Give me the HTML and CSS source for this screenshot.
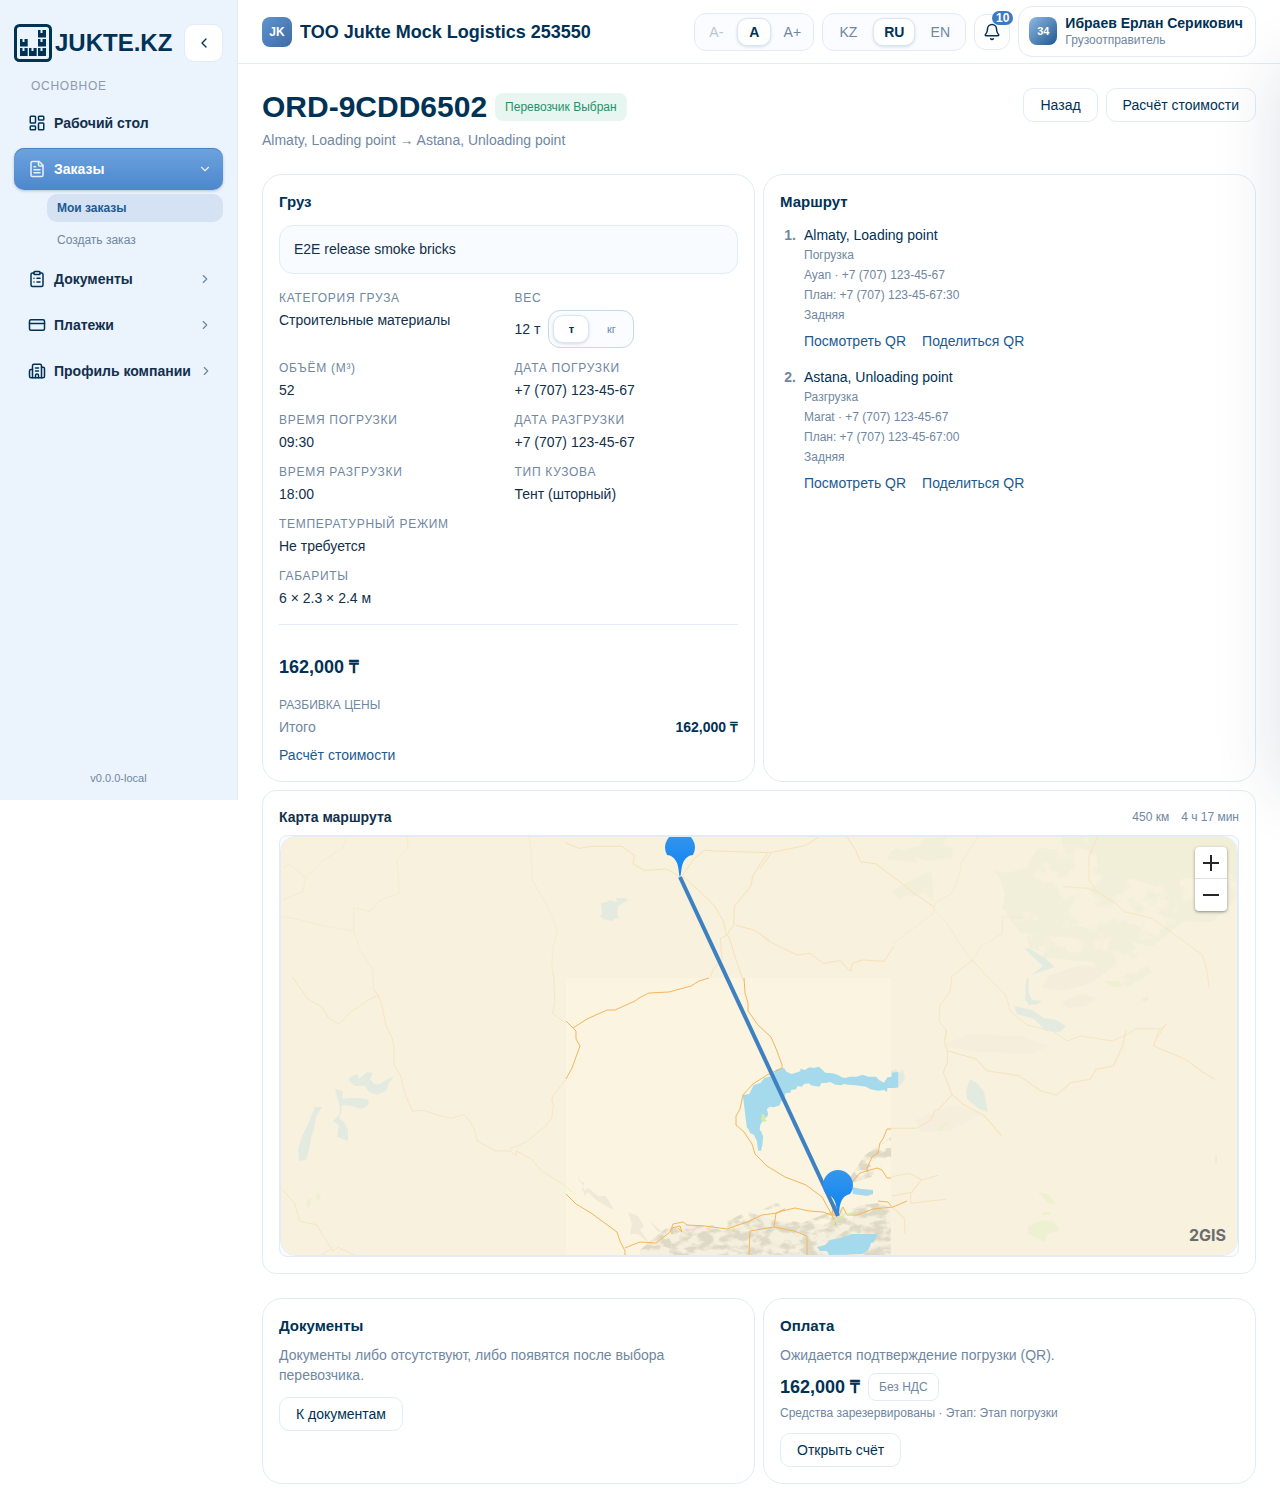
FILE: index.html
```html
<!DOCTYPE html>
<html lang="ru">
<head>
<meta charset="utf-8">
<meta name="viewport" content="width=device-width, initial-scale=1">
<title>ORD-9CDD6502 — JUKTE.KZ</title>
<link rel="stylesheet" href="styles.css">
</head>
<body>
<div class="app">
  <aside class="sidebar">
    <div class="brand-row">
      <a class="brand" href="#">
        <svg class="brand-mark" viewBox="0 0 38 38" aria-hidden="true">
          <rect x="1.5" y="1.5" width="35" height="35" rx="4" fill="none" stroke="#003256" stroke-width="3"/>
          <path fill="#003256" d="M6 15h2.500v3h2v-3h3.200v7.500H6zM6 24h2.500v3h2v-3h3.200v8H6zM15 24h2.500v3h2v-3h3.200v8H15zM24 24h2.500v3h2v-3H32v8h-8zM24 15h2.500v3h2v-3H32v7.500h-8zM24 6h2.500v3h2V6H32v7.500h-8z"/>
        </svg>
        <span class="brand-name">JUKTE.KZ</span>
      </a>
      <button class="collapse" type="button" aria-label="Свернуть меню">
        <svg class="icon-16" viewBox="0 0 24 24"><path d="m15 18-6-6 6-6"/></svg>
      </button>
    </div>
    <p class="nav-title">ОСНОВНОЕ</p>
    <nav class="nav">
      <a class="nav-item" href="#">
        <svg class="icon-18" viewBox="0 0 24 24"><rect width="7" height="9" x="3" y="3" rx="1"/><rect width="7" height="5" x="14" y="3" rx="1"/><rect width="7" height="9" x="14" y="12" rx="1"/><rect width="7" height="5" x="3" y="16" rx="1"/></svg>
        <span>Рабочий стол</span>
      </a>
      <a class="nav-item nav-item-active" href="#">
        <svg class="icon-18" viewBox="0 0 24 24"><path d="M15 2H6a2 2 0 0 0-2 2v16a2 2 0 0 0 2 2h12a2 2 0 0 0 2-2V7Z"/><path d="M14 2v4a2 2 0 0 0 2 2h4M10 9H8M16 13H8M16 17H8"/></svg>
        <span>Заказы</span>
        <svg class="nav-arrow" viewBox="0 0 24 24"><path d="m6 9 6 6 6-6"/></svg>
      </a>
      <div class="subnav">
        <a class="subnav-item subnav-item-active" href="#">Мои заказы</a>
        <a class="subnav-item" href="#">Создать заказ</a>
      </div>
      <a class="nav-item" href="#">
        <svg class="icon-18" viewBox="0 0 24 24"><rect width="8" height="4" x="8" y="2" rx="1"/><path d="M16 4h2a2 2 0 0 1 2 2v14a2 2 0 0 1-2 2H6a2 2 0 0 1-2-2V6a2 2 0 0 1 2-2h2M12 11h4M12 16h4M8 11h.01M8 16h.01"/></svg>
        <span>Документы</span>
        <svg class="nav-arrow" viewBox="0 0 24 24"><path d="m9 18 6-6-6-6"/></svg>
      </a>
      <a class="nav-item" href="#">
        <svg class="icon-18" viewBox="0 0 24 24"><rect width="20" height="14" x="2" y="5" rx="2"/><path d="M2 10h20"/></svg>
        <span>Платежи</span>
        <svg class="nav-arrow" viewBox="0 0 24 24"><path d="m9 18 6-6-6-6"/></svg>
      </a>
      <a class="nav-item" href="#">
        <svg class="icon-18" viewBox="0 0 24 24"><path d="M10 12h4M10 8h4M14 21v-3a2 2 0 0 0-4 0v3"/><path d="M6 10H4a2 2 0 0 0-2 2v7a2 2 0 0 0 2 2h16a2 2 0 0 0 2-2V9a2 2 0 0 0-2-2h-2"/><path d="M6 21V5a2 2 0 0 1 2-2h8a2 2 0 0 1 2 2v16"/></svg>
        <span>Профиль компании</span>
        <svg class="nav-arrow" viewBox="0 0 24 24"><path d="m9 18 6-6-6-6"/></svg>
      </a>
    </nav>
    <p class="version">v0.0.0-local</p>
  </aside>

  <div class="content">
    <header class="topbar">
      <div class="company">
        <span class="company-logo">JK</span>
        <span class="company-name">TOO Jukte Mock Logistics 253550</span>
      </div>
      <div class="topbar-tools">
        <div class="segment segment-font" role="group" aria-label="Размер текста">
          <button type="button" disabled>A-</button>
          <button type="button" class="is-on" aria-pressed="true">A</button>
          <button type="button">A+</button>
        </div>
        <div class="segment segment-lang" role="group" aria-label="Язык">
          <button type="button">KZ</button>
          <button type="button" class="is-on" aria-pressed="true">RU</button>
          <button type="button">EN</button>
        </div>
        <button class="bell" type="button" aria-label="Уведомления">
          <svg class="icon-18" viewBox="0 0 24 24"><path d="M10.268 21a2 2 0 0 0 3.464 0M3.262 15.326A1 1 0 0 0 4 17h16a1 1 0 0 0 .74-1.673C19.41 13.956 18 12.499 18 8A6 6 0 0 0 6 8c0 4.499-1.411 5.956-2.738 7.326"/></svg>
          <span class="bell-badge">10</span>
        </button>
        <button class="user" type="button">
          <span class="user-avatar">34</span>
          <span class="user-text">
            <span class="user-name">Ибраев Ерлан Серикович</span>
            <span class="user-role">Грузоотправитель</span>
          </span>
        </button>
      </div>
    </header>

    <main class="main">
      <div class="page-head">
        <div>
          <div class="title-row">
            <h1>ORD-9CDD6502</h1>
            <span class="status">Перевозчик Выбран</span>
          </div>
          <p class="muted">Almaty, Loading point → Astana, Unloading point</p>
        </div>
        <div class="head-actions">
          <button class="btn" type="button">Назад</button>
          <button class="btn" type="button">Расчёт стоимости</button>
        </div>
      </div>

      <div class="top-cards">
        <div class="pair">
          <section class="card">
            <h2>Груз</h2>
            <p class="cargo-note">E2E release smoke bricks</p>
            <dl class="facts">
              <div><dt>КАТЕГОРИЯ ГРУЗА</dt><dd>Строительные материалы</dd></div>
              <div>
                <dt>ВЕС</dt>
                <dd class="weight">12 т
                  <span class="segment segment-unit" role="group" aria-label="Единица веса">
                    <button type="button" class="is-on" aria-pressed="true">т</button>
                    <button type="button">кг</button>
                  </span>
                </dd>
              </div>
              <div><dt>ОБЪЁМ (М³)</dt><dd>52</dd></div>
              <div><dt>ДАТА ПОГРУЗКИ</dt><dd>+7 (707) 123-45-67</dd></div>
              <div><dt>ВРЕМЯ ПОГРУЗКИ</dt><dd>09:30</dd></div>
              <div><dt>ДАТА РАЗГРУЗКИ</dt><dd>+7 (707) 123-45-67</dd></div>
              <div><dt>ВРЕМЯ РАЗГРУЗКИ</dt><dd>18:00</dd></div>
              <div><dt>ТИП КУЗОВА</dt><dd>Тент (шторный)</dd></div>
              <div class="wide"><dt>ТЕМПЕРАТУРНЫЙ РЕЖИМ</dt><dd>Не требуется</dd></div>
              <div class="wide"><dt>ГАБАРИТЫ</dt><dd>6 × 2.3 × 2.4 м</dd></div>
            </dl>
            <div class="price-block">
              <p class="price">162,000 ₸</p>
              <p class="price-title">РАЗБИВКА ЦЕНЫ</p>
              <p class="price-row"><span class="muted">Итого</span><strong>162,000 ₸</strong></p>
              <a class="link" href="#">Расчёт стоимости</a>
            </div>
          </section>

          <section class="card">
            <h2>Маршрут</h2>
            <ol class="stops">
              <li>
                <span class="stop-number">1.</span>
                <div>
                  <p class="stop-name">Almaty, Loading point</p>
                  <p class="stop-line">Погрузка</p>
                  <p class="stop-line">Ayan · +7 (707) 123-45-67</p>
                  <p class="stop-line">План: +7 (707) 123-45-67:30</p>
                  <p class="stop-line">Задняя</p>
                  <p class="stop-links"><a class="link" href="#">Посмотреть QR</a><a class="link" href="#">Поделиться QR</a></p>
                </div>
              </li>
              <li>
                <span class="stop-number">2.</span>
                <div>
                  <p class="stop-name">Astana, Unloading point</p>
                  <p class="stop-line">Разгрузка</p>
                  <p class="stop-line">Marat · +7 (707) 123-45-67</p>
                  <p class="stop-line">План: +7 (707) 123-45-67:00</p>
                  <p class="stop-line">Задняя</p>
                  <p class="stop-links"><a class="link" href="#">Посмотреть QR</a><a class="link" href="#">Поделиться QR</a></p>
                </div>
              </li>
            </ol>
          </section>
        </div>

        <section class="card card-map">
          <div class="map-head">
            <h3>Карта маршрута</h3>
            <p class="map-stats"><span>450 км</span><span>4 ч 17 мин</span></p>
          </div>
          <div class="map-frame">
            <div class="map">
              <svg class="map-canvas" viewBox="281 837 956 418" preserveAspectRatio="xMidYMid slice" role="img" aria-label="Маршрут Алматы — Астана">
                <defs>
                  <linearGradient id="pin-fill" x1="0" y1="0" x2="0" y2="1"><stop offset="0" stop-color="#3597ea"/><stop offset=".6" stop-color="#1c89f1"/></linearGradient>
                  <filter id="terrain" x="0" y="0" width="1" height="1" color-interpolation-filters="sRGB"><feTurbulence type="fractalNoise" baseFrequency=".07 .12" numOctaves="3" seed="4"/><feColorMatrix values="0 0 0 0 .87  0 0 0 0 .85  0 0 0 0 .77  0 5 0 0 -2.1"/><feComposite in2="SourceGraphic" operator="in"/></filter>
                  <filter id="forest" x="0" y="0" width="1" height="1" color-interpolation-filters="sRGB"><feTurbulence type="fractalNoise" baseFrequency=".03 .04" numOctaves="4" seed="9"/><feColorMatrix values="0 0 0 0 .945  0 0 0 0 .937  0 0 0 0 .85  0 12 0 0 -5.3"/><feComposite in2="SourceGraphic" operator="in"/></filter>
                  <clipPath id="tile"><path d="M566 978H891V1255H566z"/></clipPath>
                </defs>
                <path d="M281 837H1237V1255H281z" fill="#f7f1de"/>
                <path d="M566 978H891V1255H566z" fill="#faf4e0"/>
                <path d="M281 837H566V978H281z" fill="#f7f1dd"/>
                <!-- forests and hills -->
                <path d="M993 870l14 3 20-5 10-20 25 2 0-13 175 0 0 60-25 25-30 0-30 25-20-5 20 30-25 15-20-5-15-20-60-5-5-20 15-10-30-5-10-15 8-15zM888 840l70-3-6 20-20 8-44-6zM892 890l40-20 2 40-20 10z" filter="url(#forest)"/>
                <path d="M1095 837h142v30l-30 14-30-4-20 10-30-10-15-10-14 4z" fill="#f2efd9"/>
                <g fill="#f1efda">
                  <path d="M998 872l10 6 14-5 15 12-3 18 12 4-6 6-20-2-18-2 3-14zM1012 922l20-3 20 8 30-1 18 10-6 6-20-4-24-2-30-4zM910 848l20-4 22 5-2 8-20 4-18-4z"/>
                </g>
                <g fill="#f5eddb"><path d="M1050 975l30-10 30 4-18 14-30 8-20-4zM1062 1002l20-8 14 4-10 8-18 2z"/><path d="M940 1046l30-12 50 2 30 10-20 8-50-2zM915 1120l40-16 26 10-30 16-30 2z" opacity=".6"/></g>
                <path d="M577 1174l3 8 4 0-2 10 6-4 10 8 8 0 8 14-8-4-10-6-8-8-4 4 0-8zM628 1212l10 4 6 10-4 4 10 14-12-10-8 0 2-10zM649 1220l14 13-6-2z" fill="#f0e9d8"/>
                <path d="M640 1250l22-20 24-6 40 8 20-6 10-12 28 8 60 4 20-12 27-8v49H640z" fill="#f5f0de" clip-path="url(#tile)"/>
                <path d="M640 1250l30-25 50 0 28-14 54 12 36-14 53-8v54H640zM845 1185l20-30 26-18v20l-20 20zM762 1210l16-8 4 6z" fill="#fff" filter="url(#terrain)"/>
                <g fill="#eef0d2"><path d="M1038 1192l10 2 8 10-8-1zM1042 1212h8v3h-8zM1028 1226l14-6 12 2 6 8-12 4-4 8-16-8zM936 1130l10-8 3 3-10 6zM1104 981l16 0 2 6-8 0zM1141 1000l6-4 2 3-4 3zM317 1193l4 2-2 5-3-1zM307 1200l4-2 0 7-4 4-1-6z"/></g>
                <!-- roads outside the detailed tile -->
                <g fill="none" stroke="#f7e1b8" stroke-width="3" stroke-linejoin="round">
                  <g transform="translate(270 800) scale(.33333)">
                    <path opacity=".35" d="M36 205l22-12 50 40 50-50 62-40 10-30M108 233l-10 42-60 25M36 350l50 8 80 20 85 15 0-70 50 12 30-35 55-20 0-40-5-60 32-35 0-40M251 393l20 60 38 55 2 60 16 20M777 110l5 30 5 100 45 80 30 70-12 50-5 50 7 50"/>
                    <path d="M66 530l50 70 40 20 20 35 30 18 40-40 60-40 20-6M312 570l15 20 10 30 10 55 20 40 5 30 0 52 20 30 12 50 22 56 36-2 40 14 42 10 40-12 28 40 10 40 55 30h45l15 14 3-14 45 25 30 35 65 40 28 25M720 1047l50-22 60-50 15-20 5-40-5-20 40-55M34 1165l40 45 15 54 50 10 50 80 15-12 60 28M190 1342l-35 22M850 520l5 80-7 40 40 30" opacity=".75"/>
                    <path d="M886 128l40 17 40-6h90l38 27-5 25 35 20 65-4 36 20M1238 225l35-50 30-24 40 2 150 5-45 70-5 30-50 62-2 55-20 30-20 10 5 65-25 25-10 25M1238 228l66 60 30 30 28 50 5 30 10 14 25 80 18 50M1397 376l55 14 48 32"/>
                  </g>
                  <g transform="translate(760 800) scale(.33333)">
                    <path d="M0 157h35l100-20 40-25M35 157l-35 50M262 111l25 40 15 35 45 5 80 60 30 25 65 45M0 400l20 20 60 30 32 15 38-5 40 30 50-8 32 33 5-25 30-10 65 4 30-45"/>
                    <path opacity=".4" d="M400 430l120-90 5-30 50-30 25-60 3-30 50-80M522 325l50 60 30 50 35 45 25-40 65-40 0-50 60 3"/>
                    <path opacity=".75" d="M1012 110l-25 60 0 70 25 35 60 40 20 20 85 20 110 80 40 30 15 50 5 50M910 260l75 5 25 10M637 480l-62 50-5 45-30 40-3 50 22 25-5 30M637 480l40 45 60 60 15 50 50 40 80 20 40 28 40-15 95 15 50-22 20-15 80 0 12-15-30 45"/>
                  </g>
                  <g transform="translate(700 1030) scale(.35714 .33333)">
                    <path opacity=".85" d="M690 0l-5 40 8 22 80 25 30 35 90 15 60 45 45 14 40-38 55-10 15-30 50-10 25-60 10-48M693 62v35l-12 30 25 67 30 28 60 35 48 60M706 194l-40 46h-8l-12 30-40 25h-73M1285 0l-15 48 90 40 50 40 32 20M1445 375v25M537 440l50-10 35 20 45-14M620 450l-30 40v30l100-12M537 498l60-12M537 530l35 35 2 45"/>
                  </g>
                </g>
                <!-- pale lakes -->
                <g fill="#e3ebe1">
                  <path d="M601 903l6-1 3-2 6 2 5-1-3 7-1 5 2 5-5 1-2 2-9-2-3-3 2-2zM616 898l9 0 3 2-8 5-4-1 1-3zM1014 1006l18 4 12 8 12 2 10 6-6 6-14-1-12-12-17-5zM1026 980l3-3-1 14 4 9 10 1-4 3-9 1-4-6zM1031 975l24-8-10-9-15-9-6-1 9 9 10 9z"/>
                  <path d="M966 1091l4-12 8 5 6 8 4 20-9-3-12-10zM891 1071l5-2 3 4 4-3 2 8-3 5-5 5-6-2z"/>
                  <path d="M349 1078l8-4 2 5 8-7 6 1-3 6 4 5 6 0 8-5 6-3-5 7-3 8-9 4-8-3-4-6-10 0-5-4zM335 1089l8 2-1 8 8-1 12 0 7 2-1 5-6 4-11-3-9-1-1 8-2 5 5 4 4 8 0 11-11-4 2-12-6-4 6-6 1-8zM315 1107l7 0-6 10-2 12-3 9-2 12-3 10-7 1-1-12 5-15 6-12z"/>
                </g>
                <!-- detailed tile: lakes and main roads -->
                <g fill="#a5d9ec">
                  <path transform="translate(700 1030) scale(.35714 .33333)" d="M120 195l18-3 12-26 20-8 10-14 20-6 15-20 20-4 8 12 14 6 24-8 0-8 12 4 14-8 12 2 14-4 10 10 8 8 20 2 14 4 12 8 10 2 12-4 20 0 16-6 16 6 22 0 8 10 14 8 10-16 12-2 0-12 18-2v46l-12 2-18 0-2 12-8-6-16 2-22-4-12-8-14-2-16-2-20-2-12-2-8 4-16-2-14-8-10 2-16 2-4 10-14-2-10-2-6-6-14 2-6 8-12-2-4 10-14 2-2 8-14 2-4 22-8 2-4 12-16 6-12-2-8 8 4 14-4 10-8 4-10 18-2 16 4 4 6 16-2 22-4 20-8 0-4-30-8-18-10-4-6-14-4-4z"/>
                  <path d="M852 1187l9 2 12 1 0 4-6 2-14-2zM817 1247l8-2 5-5 10-2 12-4 22 0 4-1-4 9-3 1-2 6-7 5-33 1-2-4-7 0z"/>
                </g>
                <g fill="none" stroke="#f5b55c" stroke-width="1" stroke-linejoin="round">
                  <path d="M566 1021l7 7 3 3 0 8 4 7-4 11-4 11-6 11M573 1028l14-9 20-9 8 0 20-9 4-3 10-5 20-1 22-6 8-5 10-3M744 978l1 15 3 10 0 8 10 14 13 12 6 14 5 14 0 3-15 7-14 9-10 11-3 14-4 7 0 9 8 7 8 12 3 10 12 12 18 11 21 8 16 12 10 18 4 10M566 1194l10 10 15 9 26 19 3 9 5 10v5M625 1248l7-3 8-3 16 1 14-11 3-8 10-2 4 3 18 1 22 3 20-7 15-7 15-2 5-2 13-3 14 3 14 1 8 3h8l4-8 4 8 10 0 16-6 20-2 14-6M672 1234v-6l8-2 2 6-4-4M749 1255l1-24 24-4 20 4 13 5 0 19M774 1227l2-14 9-4M891 1129h-4l-4 10-3 4-2 10-6 4-5 11v4M838 1192l14-10 8-9 17-5 5 2 5 8h4M878 1201l10 1 3 4M832 1215l1-8 6-3"/>
                </g>
                <path d="M762 1113l4 4-1 2 2 2-4 1-2-3zM829 1223l6-4 6-3 3 0-6 4-8 4zM845 1214l9-2 0 2-6 2z" fill="#d5eaa8"/>
                <path d="M680 877L838 1216" stroke="#3f81c0" stroke-width="4"/>
                <g fill="url(#pin-fill)">
                  <path d="M680 877c-1 0-1-9-3-14s-6-8-10-8a15 15 0 1 1 26 0c-4 0-8 3-10 8s-2 14-3 14z"/>
                  <path d="M838 1216c-1 0-1-9-3-14s-5-7-9-8a15 15 0 1 1 24 0c-4 1-7 3-9 8s-2 14-3 14z"/>
                </g>
              </svg>
              <div class="zoom">
                <button type="button" aria-label="Приблизить"><svg viewBox="0 0 16 16"><path d="M8 0v16M0 8h16"/></svg></button>
                <button type="button" aria-label="Отдалить"><svg viewBox="0 0 16 16"><path d="M0 8h16"/></svg></button>
              </div>
              <a class="map-brand" href="#">2GIS</a>
            </div>
          </div>
        </section>
      </div>

      <div class="pair">
        <section class="card">
          <h2>Документы</h2>
          <p class="muted docs-text">Документы либо отсутствуют, либо появятся после выбора перевозчика.</p>
          <button class="btn" type="button">К документам</button>
        </section>
        <section class="card">
          <h2>Оплата</h2>
          <p class="muted pay-text">Ожидается подтверждение погрузки (QR).</p>
          <div class="pay-sum"><strong class="price">162,000 ₸</strong><span class="chip">Без НДС</span></div>
          <p class="pay-state">Средства зарезервированы · Этап: Этап погрузки</p>
          <button class="btn" type="button">Открыть счёт</button>
        </section>
      </div>
    </main>
  </div>
  <div class="drawer" aria-hidden="true"></div>
</div>
</body>
</html>
```
FILE: styles.css
```css
:root {
  --navy: #003256;
  --ink: #12304c;
  --muted: #6f879f;
  --line: #e1ecf7;
  --link: #1c5a92;
}

* { box-sizing: border-box; }

body {
  margin: 0;
  background: #fff;
  color: var(--ink);
  font: 14px/20px "Liberation Sans", Arial, sans-serif;
}

h1, h2, h3, p, dl, dd, ol { margin: 0; }
ol { padding: 0; list-style: none; }
a { text-decoration: none; color: inherit; }
button { font: inherit; color: inherit; cursor: pointer; }

svg { display: block; flex: none; }
.icon-16, .icon-18, .nav-arrow {
  fill: none;
  stroke: currentColor;
  stroke-width: 2;
  stroke-linecap: round;
  stroke-linejoin: round;
}
.icon-16 { width: 16px; height: 16px; }
.icon-18 { width: 18px; height: 18px; }

.app {
  display: flex;
  align-items: flex-start;
  position: relative;
  overflow: hidden;
}

/* Sidebar */
.sidebar {
  flex: none;
  display: flex;
  flex-direction: column;
  width: 238px;
  min-height: 800px;
  padding: 24px 14px 14px;
  background: #ebf3fd;
  border-right: 1px solid var(--line);
}
.brand-row { display: flex; justify-content: space-between; align-items: center; }
.brand { display: flex; align-items: center; gap: 3px; color: var(--navy); }
.brand-mark { width: 38px; height: 38px; }
.brand-name { font: 700 24px/38px "Liberation Sans", Arial, sans-serif; }
.collapse {
  display: grid;
  place-items: center;
  width: 39px;
  height: 38px;
  padding: 0;
  color: var(--navy);
  background: #fff;
  border: 1px solid var(--line);
  border-radius: 10px;
}
.nav-title {
  margin: 16px 0 8px;
  padding-left: 17px;
  color: #8b9bad;
  font-size: 12px;
  line-height: 16px;
  letter-spacing: .06em;
}
.nav { display: flex; flex-direction: column; gap: 4px; }
.nav-item {
  display: flex;
  align-items: center;
  gap: 8px;
  height: 42px;
  padding: 0 11px 0 14px;
  border-radius: 10px;
  font-weight: 700;
  white-space: nowrap;
}
.nav-item .icon-18 { color: var(--navy); }
.nav-arrow { width: 14px; height: 14px; margin-left: auto; color: var(--muted); }
.nav-item-active {
  color: #fff;
  background: linear-gradient(#6ca3de, #4d87cd);
  box-shadow: 0 1px 3px rgba(0, 50, 86, .25), inset 0 1px 0 #4a85c9;
}
.nav-item-active .icon-18, .nav-item-active .nav-arrow { color: #e8f1fb; }
.subnav { display: flex; flex-direction: column; gap: 4px; padding-left: 33px; }
.subnav-item {
  padding: 4px 10px;
  border-radius: 10px;
  color: var(--muted);
  font-size: 12px;
}
.subnav-item-active { color: var(--link); font-weight: 700; background: #d5e2f3; }
.version { margin-top: auto; color: var(--muted); font-size: 11px; line-height: 16px; text-align: center; }

/* Top bar */
.content { flex: 1; min-width: 0; }
.topbar {
  display: flex;
  align-items: center;
  justify-content: space-between;
  height: 64px;
  padding: 0 24px;
  border-bottom: 1px solid var(--line);
}
.company { display: flex; align-items: center; gap: 8px; color: var(--navy); }
.company-logo {
  display: grid;
  place-items: center;
  width: 30px;
  height: 30px;
  border-radius: 8px;
  color: #fff;
  font-size: 12px;
  font-weight: 700;
  background: linear-gradient(135deg, #5e95d0, #3f6ba5);
}
.company-name { font-size: 18px; font-weight: 700; line-height: 24px; }
.topbar-tools { display: flex; align-items: center; gap: 8px; }

.segment {
  display: flex;
  gap: 4px;
  padding: 4px;
  background: #fafcff;
  border: 1px solid var(--line);
  border-radius: 12px;
}
.segment button {
  height: 28px;
  padding: 0;
  color: var(--muted);
  background: none;
  border: 1px solid transparent;
  border-radius: 10px;
}
.segment button:disabled { color: #b9c6d3; }
.segment .is-on {
  color: var(--navy);
  font-weight: 700;
  background: #fff;
  border-color: #d8e7f6;
  box-shadow: 0 1px 3px rgba(0, 50, 86, .16);
}
.segment-font button { width: 34px; }
.segment-lang button { width: 42px; }
.segment-unit { border-color: #c3d9ec; }
.segment-unit button { width: 36px; font-size: 11px; }

.bell {
  position: relative;
  display: grid;
  place-items: center;
  width: 36px;
  height: 36px;
  padding: 0;
  color: var(--navy);
  background: #fff;
  border: 1px solid var(--line);
  border-radius: 12px;
}
.bell-badge {
  position: absolute;
  top: -4px;
  right: -4px;
  padding: 0 4px;
  border-radius: 8px;
  color: #fff;
  background: #3b7cbf;
  font-size: 12px;
  font-weight: 700;
  line-height: 14px;
}
.user {
  display: flex;
  align-items: center;
  gap: 8px;
  padding: 7px 12px 8px 10px;
  text-align: left;
  background: #fff;
  border: 1px solid var(--line);
  border-radius: 14px;
}
.user-avatar {
  display: grid;
  place-items: center;
  width: 28px;
  height: 28px;
  border-radius: 8px;
  color: #fff;
  font-size: 11px;
  font-weight: 700;
  background: linear-gradient(135deg, #8fb9e4, #1f588f);
}
.user-text { display: grid; }
.user-name { color: var(--navy); font-weight: 700; line-height: 18px; }
.user-role { color: var(--muted); font-size: 12px; line-height: 16px; }

/* Page */
.main { display: flex; flex-direction: column; gap: 24px; padding: 24px; }
.page-head { display: flex; justify-content: space-between; align-items: flex-start; }
.title-row { display: flex; align-items: center; gap: 8px; margin-bottom: 4px; }
h1 { color: var(--navy); font-size: 30px; line-height: 38px; }
.status {
  padding: 4px 10px;
  border-radius: 8px;
  color: #26916b;
  background: #e7f6f0;
  font-size: 12px;
}
.muted { color: var(--muted); }
.head-actions { display: flex; gap: 8px; }
.btn {
  height: 34px;
  padding: 0 16px;
  color: var(--navy);
  background: #fff;
  border: 1px solid var(--line);
  border-radius: 10px;
}
.link { color: var(--link); }

.top-cards { display: flex; flex-direction: column; gap: 8px; }
.pair { display: grid; grid-template-columns: 1fr 1fr; gap: 8px; }
.card { padding: 16px; border: 1px solid var(--line); border-radius: 20px; }
h2 { color: var(--navy); font-size: 15px; line-height: 22px; }
h3 { font-size: 14px; line-height: 20px; }

.cargo-note {
  margin: 12px 0 16px;
  padding: 14px;
  line-height: 19px;
  background: #f8fbff;
  border: 1px solid var(--line);
  border-radius: 14px;
}
.facts { display: grid; grid-template-columns: 1fr 1fr; gap: 12px; }
.facts .wide { grid-column: 1 / -1; }
dt { margin-bottom: 4px; color: var(--muted); font-size: 12px; line-height: 16px; letter-spacing: .06em; }
.weight { display: flex; align-items: center; gap: 8px; }

.price-block { margin-top: 16px; padding-top: 28px; border-top: 1px solid var(--line); }
.price { color: var(--navy); font-size: 18px; font-weight: 700; line-height: 28px; }
.price-title { margin: 16px 0 4px; color: var(--muted); font-size: 12px; line-height: 16px; }
.price-row { display: flex; justify-content: space-between; margin-bottom: 8px; color: var(--navy); }

.stops { display: grid; gap: 16px; margin-top: 12px; }
.stops li { display: grid; grid-template-columns: 16px 1fr; gap: 8px; }
.stop-number { color: var(--muted); font-weight: 700; text-align: right; }
.stop-name { color: var(--navy); }
.stop-line { color: var(--muted); font-size: 12px; }
.stop-links { display: flex; gap: 16px; margin-top: 6px; }

/* Map */
.card-map { border-radius: 14px; }
.map-head { display: flex; justify-content: space-between; margin-bottom: 8px; }
.map-stats { display: flex; gap: 12px; color: var(--muted); font-size: 12px; }
.map-frame { border: 1px solid var(--line); border-radius: 8px; background: #f8fbff; }
.map {
  position: relative;
  height: 420px;
  overflow: hidden;
  border: 1px solid var(--line);
  border-radius: 16px;
}
.map-canvas { width: 100%; height: 100%; }
.zoom {
  position: absolute;
  top: 10px;
  right: 10px;
  display: grid;
  width: 32px;
  background: #fff;
  border-radius: 4px;
  box-shadow: 0 1px 3px rgba(38, 38, 38, .5);
}
.zoom button {
  display: grid;
  place-items: center;
  height: 32px;
  padding: 0;
  background: none;
  border: 0;
}
.zoom button:first-child { box-shadow: inset 0 -1px 0 #e0e0e0; }
.zoom svg { width: 16px; height: 16px; stroke: #262626; stroke-width: 2; }
.map-brand {
  position: absolute;
  right: 11px;
  bottom: 9px;
  color: #6b6c6e;
  font: 700 16px/22px Inter, sans-serif;
}

/* Bottom cards */
.docs-text { margin: 8px 0 12px; }
.pay-text { margin: 8px 0; }
.pay-sum { display: flex; align-items: center; gap: 8px; }
.chip {
  padding: 3px 10px;
  border: 1px solid var(--line);
  border-radius: 8px;
  color: var(--muted);
  font-size: 12px;
}
.pay-state { margin: 4px 0 12px; color: var(--muted); font-size: 12px; line-height: 16px; }

/* Closed side drawer, parked past the right edge */
.drawer {
  position: absolute;
  top: 64px;
  left: 100%;
  width: 400px;
  height: 720px;
  box-shadow: 0 4px 64px rgba(0, 42, 80, .14);
  pointer-events: none;
}
```
